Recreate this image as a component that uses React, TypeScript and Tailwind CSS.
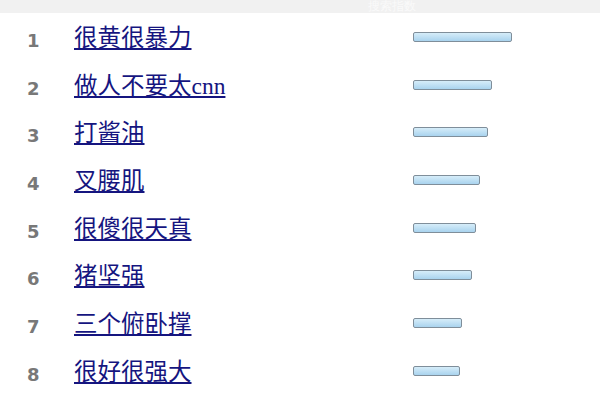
const rows = [
  { n: 1, title: '很黄很暴力', bar: 99 },
  { n: 2, title: '做人不要太cnn', bar: 79 },
  { n: 3, title: '打酱油', bar: 75 },
  { n: 4, title: '叉腰肌', bar: 67 },
  { n: 5, title: '很傻很天真', bar: 63 },
  { n: 6, title: '猪坚强', bar: 59 },
  { n: 7, title: '三个俯卧撑', bar: 49 },
  { n: 8, title: '很好很强大', bar: 47 },
];

export default function App() {
  return (
    <div className="w-[600px] h-[400px] bg-white overflow-hidden">
      {/* faded header strip */}
      <div className="h-[13px] bg-[#f1f1f1] flex">
        <span className="ml-[368px] text-[12px] leading-[13px] text-[#fafafa] font-['Liberation_Sans',sans-serif]">
          搜索指数
        </span>
      </div>

      <div className="pt-[13px]">
        {rows.map(r => (
          <div key={r.n} className="h-[47.7px] flex items-start">
            <div className="w-[74px] pl-[27px] pt-[3px] text-[18px] font-bold text-[#787878] font-['DejaVu_Sans',sans-serif] leading-[24px]">
              {r.n}
            </div>
            <div className="w-[339px]">
              <a
                href="#"
                className="text-[23.5px] leading-[24px] text-[#15157f] underline decoration-2 underline-offset-[2px] font-['Liberation_Serif','Noto_Sans_CJK_SC',serif]"
              >
                {r.title}
              </a>
            </div>
            <div className="pt-[6px]">
              <div
                className="h-[10px] rounded-[2px] border border-[#7f8e9a] bg-gradient-to-b from-[#d6edf9] to-[#a9d3ee]"
                style={{ width: r.bar }}
              />
            </div>
          </div>
        ))}
      </div>
    </div>
  );
}
